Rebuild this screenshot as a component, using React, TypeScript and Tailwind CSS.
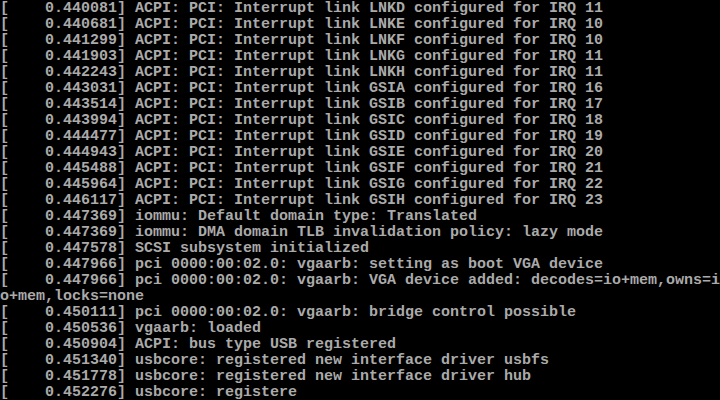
const lines = [
  "[    0.440081] ACPI: PCI: Interrupt link LNKD configured for IRQ 11",
  "[    0.440681] ACPI: PCI: Interrupt link LNKE configured for IRQ 10",
  "[    0.441299] ACPI: PCI: Interrupt link LNKF configured for IRQ 10",
  "[    0.441903] ACPI: PCI: Interrupt link LNKG configured for IRQ 11",
  "[    0.442243] ACPI: PCI: Interrupt link LNKH configured for IRQ 11",
  "[    0.443031] ACPI: PCI: Interrupt link GSIA configured for IRQ 16",
  "[    0.443514] ACPI: PCI: Interrupt link GSIB configured for IRQ 17",
  "[    0.443994] ACPI: PCI: Interrupt link GSIC configured for IRQ 18",
  "[    0.444477] ACPI: PCI: Interrupt link GSID configured for IRQ 19",
  "[    0.444943] ACPI: PCI: Interrupt link GSIE configured for IRQ 20",
  "[    0.445488] ACPI: PCI: Interrupt link GSIF configured for IRQ 21",
  "[    0.445964] ACPI: PCI: Interrupt link GSIG configured for IRQ 22",
  "[    0.446117] ACPI: PCI: Interrupt link GSIH configured for IRQ 23",
  "[    0.447369] iommu: Default domain type: Translated",
  "[    0.447369] iommu: DMA domain TLB invalidation policy: lazy mode",
  "[    0.447578] SCSI subsystem initialized",
  "[    0.447966] pci 0000:00:02.0: vgaarb: setting as boot VGA device",
  "[    0.447966] pci 0000:00:02.0: vgaarb: VGA device added: decodes=io+mem,owns=i",
  "o+mem,locks=none",
  "[    0.450111] pci 0000:00:02.0: vgaarb: bridge control possible",
  "[    0.450536] vgaarb: loaded",
  "[    0.450904] ACPI: bus type USB registered",
  "[    0.451340] usbcore: registered new interface driver usbfs",
  "[    0.451778] usbcore: registered new interface driver hub",
  "[    0.452276] usbcore: registere",
];

export default function App() {
  return (
    <div className="w-[720px] h-[400px] overflow-hidden bg-black text-[#aaaaaa] font-['Liberation_Mono',monospace] font-bold text-[15px] leading-[16px] pt-px">
      {lines.map((line, i) => (
        <div key={i} className="h-4 whitespace-pre">
          {line}
        </div>
      ))}
    </div>
  );
}
